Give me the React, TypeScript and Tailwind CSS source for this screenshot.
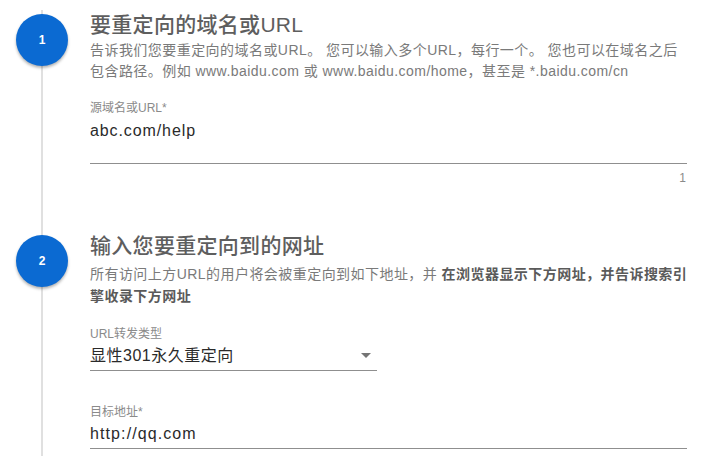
import React from "react";

const FONT = { fontFamily: '"Liberation Sans", "Noto Sans CJK SC", sans-serif' };

function Step({ n, children }: { n: number; children: React.ReactNode }) {
  return (
    <div className="flex">
      <div className="relative w-[84px] shrink-0 flex justify-center">
        <div className="absolute left-[41px] top-0 bottom-0 w-[2px] bg-[#e0e0e0]" />
        <div className="relative z-10 mt-[4px] w-[52px] h-[52px] rounded-full bg-[#0b6ad2] shadow-[0_2px_3px_rgba(0,0,0,0.3)] flex items-center justify-center text-white text-[12px] font-bold">
          {n}
        </div>
      </div>
      <div className="pl-[6px] w-[603px]">{children}</div>
    </div>
  );
}

export default function App() {
  return (
    <div className="w-[714px] h-[456px] overflow-hidden bg-white" style={FONT}>
      <div className="pt-[10px]">
        <Step n={1}>
          <div className="text-[21px] leading-[29px] font-medium text-[#5e5e5e] tracking-[0.3px]">要重定向的域名或URL</div>
          <div className="mt-[1px] text-[14px] leading-[21px] text-[#7a7a7a] whitespace-nowrap tracking-[0.45px]">
            告诉我们您要重定向的域名或URL。 您可以输入多个URL，每行一个。 您也可以在域名之后
            <br />
            包含路径。例如 www.baidu.com 或 www.baidu.com/home，甚至是 *.baidu.com/cn
          </div>
          <div className="mt-[18px] w-[597px]">
            <div className="text-[12px] leading-[16px] text-[#8a8a8a]">源域名或URL*</div>
            <div className="mt-[3px] h-[45px] text-[16px] leading-[24px] text-[#2a2a2a] tracking-[0.9px] border-b border-[#8f8f8f]">abc.com/help</div>
            <div className="mt-[7px] text-right pr-[1px] text-[12px] leading-[14px] text-[#8a8a8a]">1</div>
          </div>
          <div className="h-[46px]" />
        </Step>
        <Step n={2}>
          <div className="text-[21px] leading-[29px] font-medium text-[#5e5e5e] tracking-[0.3px]">输入您要重定向到的网址</div>
          <div className="mt-[3px] text-[14px] leading-[22px] text-[#7a7a7a] whitespace-nowrap tracking-[0.45px]">
            所有访问上方URL的用户将会被重定向到如下地址，并 <span className="font-bold text-[#5a5a5a]">在浏览器显示下方网址，并告诉搜索引</span>
            <br />
            <span className="font-bold text-[#5a5a5a]">擎收录下方网址</span>
          </div>
          <div className="mt-[19px] w-[287px]">
            <div className="text-[12px] leading-[16px] text-[#8a8a8a]">URL转发类型</div>
            <div className="mt-[2px] h-[27px] flex items-start justify-between border-b border-[#8f8f8f]">
              <span className="text-[16px] leading-[24px] text-[#2a2a2a] tracking-[0.5px]">显性301永久重定向</span>
              <svg width="10" height="5" viewBox="0 0 10 5" className="mt-[9px] mr-[6px]">
                <path d="M0 0 L10 0 L5 5 Z" fill="#757575" />
              </svg>
            </div>
          </div>
          <div className="mt-[33px] w-[597px]">
            <div className="text-[12px] leading-[16px] text-[#8a8a8a]">目标地址*</div>
            <div className="mt-[2px] h-[27px] text-[16px] leading-[24px] text-[#2a2a2a] tracking-[1.1px] border-b border-[#8f8f8f]">http://qq.com</div>
          </div>
          <div className="h-[20px]" />
        </Step>
      </div>
    </div>
  );
}
